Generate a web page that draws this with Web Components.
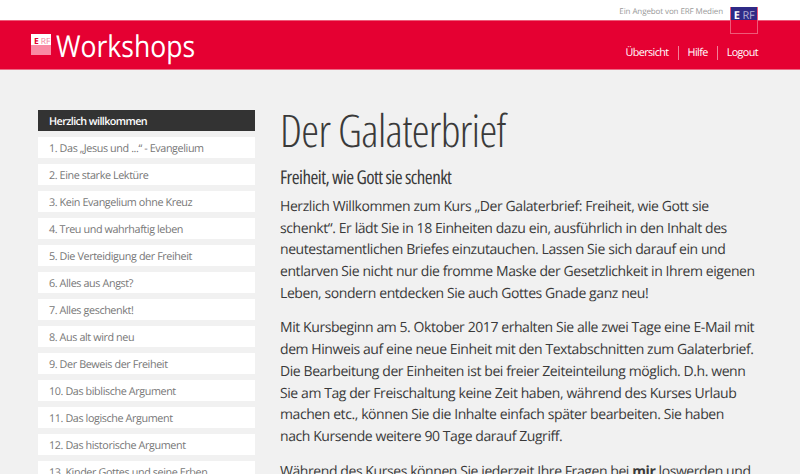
<!DOCTYPE html>
<html lang="de">
<head>
<meta charset="utf-8">
<title>Der Galaterbrief</title>
<style>
  html, body { margin: 0; height: 474px; overflow: hidden; background: #f1f1f1; }
  body { font-family: "Open Sans", sans-serif; text-rendering: geometricPrecision; }
</style>
</head>
<body>
<site-header></site-header>
<page-layout>
  <side-nav slot="side">
    <nav-item active>Herzlich willkommen</nav-item>
    <nav-item>1. Das „Jesus und ...“ - Evangelium</nav-item>
    <nav-item>2. Eine starke Lektüre</nav-item>
    <nav-item>3. Kein Evangelium ohne Kreuz</nav-item>
    <nav-item>4. Treu und wahrhaftig leben</nav-item>
    <nav-item>5. Die Verteidigung der Freiheit</nav-item>
    <nav-item>6. Alles aus Angst?</nav-item>
    <nav-item>7. Alles geschenkt!</nav-item>
    <nav-item>8. Aus alt wird neu</nav-item>
    <nav-item>9. Der Beweis der Freiheit</nav-item>
    <nav-item>10. Das biblische Argument</nav-item>
    <nav-item>11. Das logische Argument</nav-item>
    <nav-item>12. Das historische Argument</nav-item>
    <nav-item>13. Kinder Gottes und seine Erben</nav-item>
  </side-nav>
  <course-article>
    <span slot="title">Der Galaterbrief</span>
    <span slot="subtitle">Freiheit, wie Gott sie schenkt</span>
    <p>Herzlich Willkommen zum Kurs „Der Galaterbrief: Freiheit, wie Gott sie<br>schenkt“. Er lädt Sie in 18 Einheiten dazu ein, ausführlich in den Inhalt des<br>neutestamentlichen Briefes einzutauchen. Lassen Sie sich darauf ein und<br>entlarven Sie nicht nur die fromme Maske der Gesetzlichkeit in Ihrem eigenen<br>Leben, sondern entdecken Sie auch Gottes Gnade ganz neu!</p>
    <p>Mit Kursbeginn am 5. Oktober 2017 erhalten Sie alle zwei Tage eine E-Mail mit<br>dem Hinweis auf eine neue Einheit mit den Textabschnitten zum Galaterbrief.<br>Die Bearbeitung der Einheiten ist bei freier Zeiteinteilung möglich. D.h. wenn<br>Sie am Tag der Freischaltung keine Zeit haben, während des Kurses Urlaub<br>machen etc., können Sie die Inhalte einfach später bearbeiten. Sie haben<br>nach Kursende weitere 90 Tage darauf Zugriff.</p>
    <p>Während des Kurses können Sie jederzeit Ihre Fragen bei <b>mir</b> loswerden und</p>
  </course-article>
</page-layout>

<script>
class SiteHeader extends HTMLElement {
  connectedCallback() {
    this.attachShadow({ mode: 'open' });
    this.shadowRoot.innerHTML = `
      <style>
        :host { display: block; position: relative; font-family: "Open Sans", sans-serif; }
        .top {
          height: 17px; padding: 3px 77px 0 0; background: #fff;
          display: flex; justify-content: flex-end; align-items: center;
          font-size: 8px; letter-spacing: -.1px; color: #999;
        }
        .bar {
          height: 48px; background: #e50032;
          border-top: 1px solid #ee5a78;
          border-bottom: 1px solid #eb6a85;
          display: flex; justify-content: space-between;
          padding: 0 42px 0 31px;
        }
        .brand { display: flex; align-items: flex-start; padding-top: 5px; gap: 5px; }
        .mark { width: 20px; height: 21px; margin-top: 8px; padding-left: 3px; box-sizing: border-box; background: linear-gradient(#fff 0 11px, #f98aa4 11px); color: #e50032; font-size: 8.5px; line-height: 16px; display: flex; gap: 2px; white-space: nowrap; }
        .mark b { font-weight: 700; }
        .mark i { font-style: normal; color: #f1809a; }
        .brand span { display: block; font-size: 30px; line-height: 40px; color: #fff; transform: scaleX(.885); transform-origin: left; }
        .links { display: flex; align-items: center; padding-top: 14px; height: 36px; }
        .links a { color: #fff; font-size: 10.8px; letter-spacing: -.6px; padding: 0 9px; line-height: 14px; border-left: 1px solid #f37f99; }
        .links a:first-child { border-left: 0; }
        .links a:last-child { padding-right: 0; }
        .erf {
          position: absolute; top: 7px; right: 42px; width: 26px; height: 26px;
          border: 1px solid #ee5a78; border-top: 0; background: linear-gradient(#2f2a86 0 13px, #e50032 13px);
          color: #fff; font-size: 11px; line-height: 17px; letter-spacing: -.4px; display: flex; gap: 3px; justify-content: center; align-items: flex-start;
        }
        .erf b { font-weight: 700; }
        .erf i { font-style: normal; color: #b5b3d6; }
      </style>
      <div class="top">Ein Angebot von ERF Medien</div>
      <div class="bar">
        <div class="brand"><div class="mark"><b>E</b><i>RF</i></div><span>Workshops</span></div>
        <div class="links"><a>Übersicht</a><a>Hilfe</a><a>Logout</a></div>
      </div>
      <div class="erf"><b>E</b><i>RF</i></div>
    `;
  }
}
customElements.define('site-header', SiteHeader);

class PageLayout extends HTMLElement {
  connectedCallback() {
    this.attachShadow({ mode: 'open' });
    this.shadowRoot.innerHTML = `
      <style>
        :host { display: grid; grid-template-columns: 217px 478px; column-gap: 25px; padding: 40px 0 0 38px; }
      </style>
      <slot name="side"></slot>
      <slot></slot>
    `;
  }
}
customElements.define('page-layout', PageLayout);

class SideNav extends HTMLElement {
  connectedCallback() {
    this.attachShadow({ mode: 'open' });
    this.shadowRoot.innerHTML = `
      <style>:host { display: flex; flex-direction: column; gap: 6px; }</style>
      <slot></slot>
    `;
  }
}
customElements.define('side-nav', SideNav);

class NavItem extends HTMLElement {
  connectedCallback() {
    this.attachShadow({ mode: 'open' });
    this.shadowRoot.innerHTML = `
      <style>
        :host { display: block; height: 21px; line-height: 23px; padding-left: 11px; background: #fff; color: #777; font-size: 10.8px; letter-spacing: -.4px; font-family: "Open Sans", sans-serif; white-space: nowrap; overflow: hidden; }
        :host([active]) { background: #333; color: #fff; font-weight: 600; letter-spacing: -.6px; }
      </style>
      <slot></slot>
    `;
  }
}
customElements.define('nav-item', NavItem);

class CourseArticle extends HTMLElement {
  connectedCallback() {
    this.attachShadow({ mode: 'open' });
    this.shadowRoot.innerHTML = `
      <style>
        :host { display: block; font-family: "Open Sans", sans-serif; color: #3a3a3a; font-size: 14px; letter-spacing: -.42px; line-height: 21.7px; }
        h1 { margin: 0; font-size: 45px; line-height: 42px; letter-spacing: -.65px; font-weight: 300; font-stretch: 75%; }
        h2 { margin: 13px 0 7px; font-size: 19px; line-height: 24px; letter-spacing: -.55px; font-weight: 400; font-stretch: 75%; }
        ::slotted(p) { margin: 0 0 12.9px; white-space: nowrap; }
      </style>
      <h1><slot name="title"></slot></h1>
      <h2><slot name="subtitle"></slot></h2>
      <slot></slot>
    `;
  }
}
customElements.define('course-article', CourseArticle);
</script>
</body>
</html>
